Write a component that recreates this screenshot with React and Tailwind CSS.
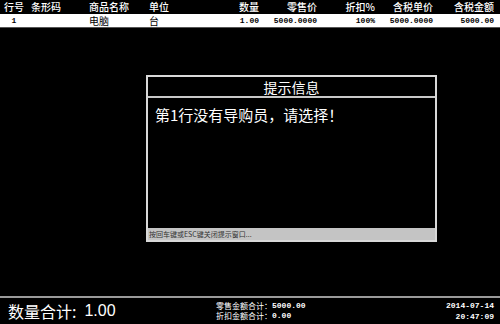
const cols = [
  { label: '行号', w: 'w-[28px]', align: 'text-center' },
  { label: '条形码', w: 'w-[58px]', align: 'text-left' },
  { label: '商品名称', w: 'w-[60px]', align: 'text-left' },
  { label: '单位', w: 'w-[60px]', align: 'text-left' },
  { label: '数量', w: 'w-[56px]', align: 'text-right' },
  { label: '零售价', w: 'w-[58px]', align: 'text-right' },
  { label: '折扣%', w: 'w-[58px]', align: 'text-right' },
  { label: '含税单价', w: 'w-[58px]', align: 'text-right' },
  { label: '含税金额', w: 'w-[61px]', align: 'text-right' },
];

const row = ['1', '', '电脑', '台', '1.00', '5000.0000', '100%', '5000.0000', '5000.00'];

const cjk = "font-['Noto_Sans_CJK_SC',sans-serif]";
const mono = "font-['Liberation_Mono','Noto_Sans_CJK_SC',monospace]";

function MessageBox() {
  return (
    <div className="absolute left-[146px] top-[75px] w-[291px] h-[167px] border-2 border-[#d8d8d8] bg-black flex flex-col">
      <div className={`h-[21px] flex items-center justify-center border-b-2 border-[#c8c8c8] text-white text-[14px] leading-none ${cjk}`}>
        提示信息
      </div>
      <div className={`flex-1 px-[7px] pt-[9px] text-white text-[15px] leading-none ${cjk}`}>
        第1行没有导购员，请选择！
      </div>
      <div className={`h-[12px] bg-[#c4c4c4] flex items-center px-[1px] text-[#333] text-[7px] leading-none ${cjk}`}>
        按回车键或ESC键关闭提示窗口...
      </div>
    </div>
  );
}

export default function App() {
  return (
    <div className="relative w-[500px] h-[324px] bg-black flex flex-col overflow-hidden">
      <div className={`flex h-[14px] items-center bg-black text-white text-[10px] font-medium leading-none ${cjk}`}>
        {cols.map((c) => (
          <div key={c.label} className={`${c.w} ${c.align} shrink-0 px-[3px]`}>{c.label}</div>
        ))}
      </div>
      <div className="flex h-[14px] items-center bg-white text-black border-b border-[#555]">
        {cols.map((c, i) => (
          <div
            key={c.label}
            className={`${c.w} ${c.align} shrink-0 px-[3px] leading-none ${i === 2 || i === 3 ? `${cjk} text-[10px]` : `${mono} text-[8px] font-bold`}`}
          >
            {row[i]}
          </div>
        ))}
      </div>

      <div className="flex-1" />

      <div className="h-[28px] border-t-2 border-[#9a9a9a] flex items-center text-white">
        <div className={`w-[210px] pl-[8px] flex items-center text-[16px] leading-none ${cjk}`}>
          <span>数量合计:</span>
          <span className="ml-[8px] font-['Liberation_Sans',sans-serif]">1.00</span>
        </div>
        <div className="flex-1 flex flex-col gap-[2px] pl-[6px]">
          <div className="flex items-center leading-none">
            <span className={`text-[8px] ${cjk}`}>零售金额合计：</span>
            <span className={`text-[8px] font-bold ${mono}`}>5000.00</span>
          </div>
          <div className="flex items-center leading-none">
            <span className={`text-[8px] ${cjk}`}>折扣金额合计：</span>
            <span className={`text-[8px] font-bold ${mono}`}>0.00</span>
          </div>
        </div>
        <div className={`flex flex-col items-end gap-[3px] pr-[6px] text-[8px] font-bold leading-none ${mono}`}>
          <span>2014-07-14</span>
          <span>20:47:09</span>
        </div>
      </div>

      <MessageBox />
    </div>
  );
}
